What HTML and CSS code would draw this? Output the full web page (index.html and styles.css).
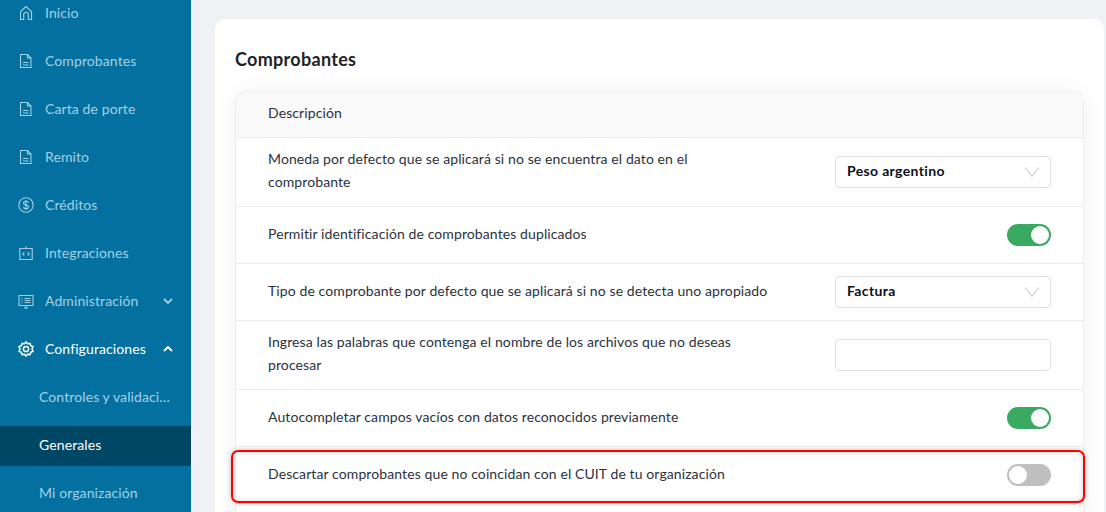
FILE: index.html
```html
<!DOCTYPE html>
<html lang="es">
<head>
  <meta charset="UTF-8">
  <title>Configuraciones generales</title>
  <link rel="stylesheet" href="styles.css">
</head>
<body>

  <aside class="sidebar">
    <nav class="menu">
      <a class="menu-item">
        <svg class="icon" viewBox="0 0 16 16"><path d="M2.500 14.500V6.500L8 1.500l5.500 5v8h-3.200V9.500a2.300 2.300 0 0 0-4.600 0v5z"/></svg>
        <span>Inicio</span>
      </a>
      <a class="menu-item">
        <svg class="icon" viewBox="0 0 16 16"><path d="M2.500 1.500h7l3.500 3.500v9.500H2.500zM9.500 1.500V5H13M5 9.500h5.500M5 12h5.500"/></svg>
        <span>Comprobantes</span>
      </a>
      <a class="menu-item">
        <svg class="icon" viewBox="0 0 16 16"><path d="M2.500 1.500h7l3.500 3.500v9.500H2.500zM9.500 1.500V5H13M5 9.500h5.500M5 12h5.500"/></svg>
        <span>Carta de porte</span>
      </a>
      <a class="menu-item">
        <svg class="icon" viewBox="0 0 16 16"><path d="M2.500 1.500h7l3.500 3.500v9.500H2.500zM9.500 1.500V5H13M5 9.500h5.500M5 12h5.500"/></svg>
        <span>Remito</span>
      </a>
      <a class="menu-item">
        <svg class="icon" viewBox="0 0 16 16"><circle cx="8" cy="8" r="7.200"/><path d="M10.400 5.600C10 4.600 9 4.300 8 4.300c-1.300 0-2.400.7-2.400 1.900 0 2.600 4.900 1.200 4.900 3.700 0 1.200-1.200 1.900-2.500 1.900-1.200 0-2.200-.5-2.600-1.500M8 3v10"/></svg>
        <span>Créditos</span>
      </a>
      <a class="menu-item">
        <svg class="icon" viewBox="0 0 16 16"><path d="M1.800 3.500h12.400v11H1.800zM8 3.500V1.200M6.300 7.500 4.800 9l1.500 1.500M9.700 7.500 11.200 9l-1.500 1.500"/></svg>
        <span>Integraciones</span>
      </a>
      <a class="menu-item">
        <svg class="icon" viewBox="0 0 16 16"><path d="M1 2.500h14v10H1zM6 15h4M8 12.500V15M6.500 5.500h6M6.500 7.500h6M6.500 9.500h6M3.500 5.500h1M3.500 7.500h1M3.500 9.500h1"/></svg>
        <span>Administración</span>
        <svg class="arrow" viewBox="0 0 10 6"><path d="M1 1l4 4 4-4"/></svg>
      </a>
      <a class="menu-item open">
        <svg class="icon" viewBox="0 0 16 16"><path d="M8 1l1.600 1.800 2.400-.4.800 2.300 2.200 1L14 8l1 2.300-2.200 1-.8 2.300-2.400-.4L8 15l-1.600-1.800-2.400.4-.8-2.300-2.200-1L2 8 1 5.700l2.200-1 .8-2.300 2.400.4z"/><circle cx="8" cy="8" r="2.600"/></svg>
        <span>Configuraciones</span>
        <svg class="arrow" viewBox="0 0 10 6"><path d="M1 5l4-4 4 4"/></svg>
      </a>
      <a class="sub-item">Controles y validaciones</a>
      <a class="sub-item active">Generales</a>
      <a class="sub-item">Mi organización</a>
    </nav>
  </aside>

  <main class="content">
    <section class="card">
      <h2>Comprobantes</h2>
      <div class="table">
        <div class="table-head">Descripción</div>

        <div class="row">
          <p>Moneda por defecto que se aplicará si no se encuentra el dato en el comprobante</p>
          <div class="select"><b>Peso argentino</b><svg viewBox="0 0 14 10"><path d="M.5.5 7 9.500 13.500.5"/></svg></div>
        </div>

        <div class="row">
          <p>Permitir identificación de comprobantes duplicados</p>
          <span class="toggle on"></span>
        </div>

        <div class="row">
          <p>Tipo de comprobante por defecto que se aplicará si no se detecta uno apropiado</p>
          <div class="select"><b>Factura</b><svg viewBox="0 0 14 10"><path d="M.5.5 7 9.500 13.500.5"/></svg></div>
        </div>

        <div class="row">
          <p>Ingresa las palabras que contenga el nombre de los archivos que no deseas procesar</p>
          <input class="select" type="text">
        </div>

        <div class="row">
          <p>Autocompletar campos vacíos con datos reconocidos previamente</p>
          <span class="toggle on"></span>
        </div>

        <div class="row marked">
          <p>Descartar comprobantes que no coincidan con el CUIT de tu organización</p>
          <span class="toggle"></span>
        </div>

        <div class="row"></div>
      </div>
    </section>
  </main>

</body>
</html>
```

FILE: styles.css
```css
html, body {
  height: 512px;
  overflow: hidden;
}
body {
  margin: 0;
  display: flex;
  background: #f0f1f5;
  font-family: Lato, "Noto Sans", sans-serif;
  font-size: 14px;
  letter-spacing: .1px;
  color: #2b3240;
}

/* sidebar */
.sidebar {
  width: 191px;
  flex: none;
  background: #04709f;
  overflow: hidden;
}
.menu {
  margin-top: -11px;
}
.menu-item {
  display: flex;
  align-items: center;
  height: 48px;
  padding: 0 18px;
  color: #a3d0e2;
}
.menu-item .icon {
  width: 16px;
  height: 16px;
  flex: none;
  margin-right: 11px;
  fill: none;
  stroke: currentColor;
  stroke-width: 1.1;
}
.menu-item span {
  flex: 1;
  padding-bottom: 2px;
}
.menu-item .arrow {
  width: 10px;
  height: 6px;
  flex: none;
  fill: none;
  stroke: currentColor;
  stroke-width: 1.8;
}
.menu-item.open {
  margin-bottom: 5px;
  color: #fff;
}
.menu-item.open .icon {
  stroke-width: 1.5;
}
.sub-item {
  display: block;
  height: 40px;
  line-height: 38px;
  margin-bottom: 8px;
  padding: 0 18px 0 39px;
  color: #a3d0e2;
  white-space: nowrap;
  overflow: hidden;
  text-overflow: ellipsis;
}
.sub-item.active {
  background: #004766;
  color: #fff;
}

/* content */
.content {
  flex: 1;
  padding: 19px 2px 0 24px;
}
.card {
  height: 600px;
  padding: 1px 20px 0;
  background: #fff;
  border-radius: 10px;
}
.card h2 {
  margin: 27px 0 20px;
  font-size: 18px;
  line-height: 24px;
  font-weight: 700;
  letter-spacing: .3px;
  color: #1f2328;
}
.table {
  border: 1px solid #eeeeef;
  border-bottom: 0;
  border-radius: 10px 10px 0 0;
  box-shadow: 0 2px 24px rgba(0, 0, 0, .06);
}
.table-head {
  height: 45px;
  line-height: 42px;
  padding: 0 32px;
  background: #f9f9f9;
  border-bottom: 1px solid #ebebec;
  border-radius: 10px 10px 0 0;
}
.row {
  position: relative;
  display: flex;
  align-items: center;
  justify-content: space-between;
  min-height: 56px;
  padding: 0 32px;
  border-bottom: 1px solid #ebebec;
}
.row p {
  width: 504px;
  margin: 0;
  padding: 9px 0 13px;
  line-height: 23px;
}

/* controls */
.select {
  display: flex;
  align-items: center;
  justify-content: space-between;
  width: 216px;
  height: 32px;
  box-sizing: border-box;
  padding: 0 11px;
  background: #fff;
  border: 1px solid #dfdfe1;
  border-radius: 4px;
  color: #0b0f1a;
}
.select b {
  padding-bottom: 4px;
  letter-spacing: .35px;
}
.select svg {
  width: 14px;
  height: 10px;
  fill: none;
  stroke: #c2c2c4;
  stroke-width: 1;
}
.toggle {
  position: relative;
  display: block;
  width: 44px;
  height: 22px;
  flex: none;
  border-radius: 11px;
  background: #bfbfbf;
}
.toggle::after {
  content: "";
  position: absolute;
  top: 2px;
  left: 2px;
  width: 18px;
  height: 18px;
  border-radius: 50%;
  background: #fff;
}
.toggle.on {
  background: #3aaa62;
}
.toggle.on::after {
  left: 24px;
}

/* red highlight over the last row */
.marked::after {
  content: "";
  position: absolute;
  top: 3px;
  left: -5px;
  right: -2px;
  bottom: 0;
  border: 2px solid #f00;
  border-radius: 7px;
  box-shadow: 0 0 5px rgba(0, 0, 0, .25), inset 0 0 5px rgba(0, 0, 0, .2);
}
```
